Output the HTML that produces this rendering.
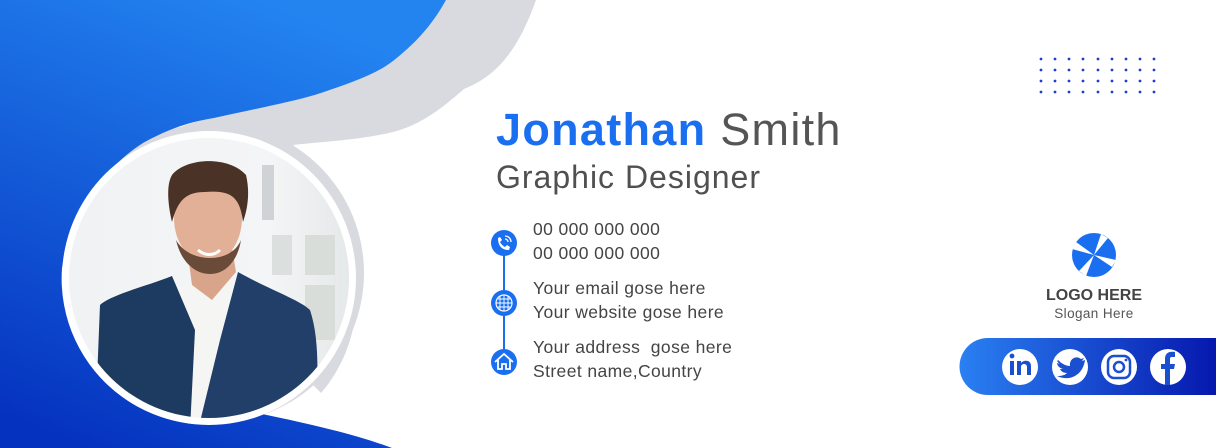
<!DOCTYPE html>
<html><head><meta charset="utf-8"><style>
html,body{margin:0;padding:0;background:#fff}
body{width:1216px;height:448px;position:relative;overflow:hidden;font-family:"Liberation Sans",sans-serif}
.t{position:absolute;white-space:nowrap}
</style></head><body>
<svg width="1216" height="448" style="position:absolute;left:0;top:0">
<defs>
<linearGradient id="bg" x1="0.6" y1="0" x2="0.2" y2="1">
<stop offset="0" stop-color="#2384f0"/><stop offset="1" stop-color="#0533c0"/></linearGradient>
<linearGradient id="sb" x1="0" y1="0" x2="1" y2="0">
<stop offset="0" stop-color="#2a80f2"/><stop offset="1" stop-color="#0618ae"/></linearGradient>
<linearGradient id="ph" x1="0" y1="0" x2="1" y2="0">
<stop offset="0" stop-color="#f0f2f4"/><stop offset="0.7" stop-color="#f4f5f6"/><stop offset="1" stop-color="#e3e7e7"/></linearGradient>
<clipPath id="pc"><circle cx="209" cy="278" r="140"/></clipPath>
</defs>
<circle cx="214" cy="273" r="150" fill="#d9dadf"/>
<path d="M446,0 H536 C520,45 500,75 464,89 C440,110 420,125 393,132 C360,140 320,142 293,145 C330,175 352,220 357,285 C358,330 345,365 321,393 L209,278 L150,150 C170,128 190,122 214,118 C260,108 300,100 321,93 C350,83 375,75 393,61 C420,40 435,20 446,0 Z" fill="#d9dadf"/>
<path d="M0,0 H446 C435,20 420,40 393,61 C375,75 350,83 321,93 C300,100 260,108 214,118 C190,122 170,128 143,143 C100,170 70,220 62,268 A146,146 0 0 0 262,414 C320,426 360,436 392,448 H0 Z" fill="url(#bg)"/>
<circle cx="209" cy="278" r="147" fill="#fff"/>
<g clip-path="url(#pc)">
<rect x="60" y="130" width="300" height="300" fill="url(#ph)"/>
<rect x="262" y="165" width="12" height="55" fill="#cfd3d5"/>
<rect x="305" y="235" width="30" height="40" fill="#d8ddda"/>
<rect x="305" y="285" width="30" height="55" fill="#d8ddda"/>
<rect x="272" y="235" width="20" height="40" fill="#dbdfde"/>
<path d="M170,290 L200,280 L245,280 L265,320 L240,420 L160,420 Z" fill="#f5f6f3"/>
<path d="M100,305 C110,295 150,285 172,276 L195,330 L190,430 L95,430 Z" fill="#1d3a60"/>
<path d="M238,272 C270,290 300,300 310,310 C320,340 318,380 315,430 L198,430 L220,340 Z" fill="#213f68"/>
<path d="M188,255 L192,285 L212,300 L236,272 L232,248 Z" fill="#d9a58a"/>
<ellipse cx="208" cy="218" rx="34" ry="45" fill="#e2b096"/>
<path d="M172,222 C168,205 166,185 172,175 C185,158 228,155 246,175 C250,192 248,208 243,222 C240,196 230,190 205,192 C186,192 178,200 172,222 Z" fill="#4a3326"/>
<path d="M176,240 C181,262 195,274 210,274 C226,274 238,260 241,240 C236,252 224,258 210,258 C196,258 183,252 176,240 Z" fill="#6a4a38"/>
<path d="M198,250 C205,256 214,256 220,250" stroke="#fff" stroke-width="3" fill="none"/>
</g>
<line x1="504" y1="243" x2="504" y2="362" stroke="#1a6ff0" stroke-width="2"/>
<circle cx="504" cy="243" r="13" fill="#1a6ff0"/>
<circle cx="504" cy="303" r="13" fill="#1a6ff0"/>
<circle cx="504" cy="362" r="13" fill="#1a6ff0"/>
<path d="M498,238 C498,246 502,250 509,250 L510,247 L507,245 L505,247 C503,246 501,244 500,242 L502,240 L500,237 Z" fill="#fff"/>
<path d="M505,236 A6,6 0 0 1 511,242 M505,239 A3,3 0 0 1 508,242" stroke="#fff" stroke-width="1.3" fill="none"/>
<circle cx="504" cy="303" r="8" fill="none" stroke="#fff" stroke-width="1.2"/>
<path d="M496,303 H512 M504,295 V311 M498,299 H510 M498,307 H510 M500,296 V310 M508,296 V310" stroke="#fff" stroke-width="0.9"/>
<path d="M495,362 L504,354 L513,362 M498,360 V369 H502 V364 H506 V369 H510 V360" stroke="#fff" stroke-width="1.8" fill="none"/>
<g fill="#1c3fd0">
<g id="r"><circle cx="1041" cy="59" r="1.4"/><circle cx="1055" cy="59" r="1.4"/><circle cx="1069" cy="59" r="1.4"/><circle cx="1083" cy="59" r="1.4"/><circle cx="1098" cy="59" r="1.4"/><circle cx="1112" cy="59" r="1.4"/><circle cx="1126" cy="59" r="1.4"/><circle cx="1140" cy="59" r="1.4"/><circle cx="1154" cy="59" r="1.4"/></g>
<use href="#r" y="11"/><use href="#r" y="22"/><use href="#r" y="33"/>
</g>
<circle cx="1094" cy="255" r="22" fill="#1a6ff0"/>
<g fill="#fff">
<path d="M1094,255 L1101,234 L1108,238 Z"/>
<path d="M1094,255 L1116,260 L1112,267 Z"/>
<path d="M1094,255 L1086,276 L1079,271 Z"/>
<path d="M1094,255 L1072,249 L1076,242 Z"/>
</g>
<path d="M988,338 H1216 V395 H988 A28.5,28.5 0 0 1 988,338 Z" fill="url(#sb)"/>
<g fill="#fff"><circle cx="1020" cy="367" r="18"/><circle cx="1070" cy="367" r="18"/><circle cx="1119" cy="367" r="18"/><circle cx="1168" cy="367" r="18"/></g>
<g fill="#1a4fd0">
<rect x="1010" y="361" width="4" height="14"/><circle cx="1012" cy="356" r="2.4"/>
<path d="M1017,361 H1021 V363 C1023,360 1031,359 1031,366 V375 H1027 V367 C1027,363 1021,363 1021,367 V375 H1017 Z"/>
<path d="M1058,360 C1062,364 1066,366 1070,366 C1069,359 1076,355 1081,359 L1084,358 L1082,361 L1085,360 C1083,375 1070,382 1057,376 C1062,376 1065,375 1067,373 C1063,373 1061,371 1060,369 L1063,369 C1059,368 1057,365 1057,363 L1060,364 C1057,362 1057,361 1058,360 Z"/>
<rect x="1108" y="356" width="22" height="22" rx="6" fill="none" stroke="#1a4fd0" stroke-width="2.5"/>
<circle cx="1119" cy="367" r="5" fill="none" stroke="#1a4fd0" stroke-width="2.5"/>
<circle cx="1126" cy="360" r="1.4"/>
<path d="M1165,385 V369 H1161 V364 H1165 V359 C1165,353 1169,351 1175,352 V357 H1172 C1170,357 1170,358 1170,360 V364 H1175 L1174,369 H1170 V385 Z"/>
</g>
</svg>
<div class="t" style="left:496px;top:104px;font-size:45px;line-height:52px;letter-spacing:1.3px"><b style="color:#1a6ff0">Jonathan</b> <span style="color:#555">Smith</span></div>
<div class="t" style="left:496px;top:158px;font-size:32px;line-height:38px;color:#505050;letter-spacing:1px">Graphic Designer</div>
<div class="t" style="left:533px;top:217px;font-size:17.5px;line-height:24px;color:#444;letter-spacing:0.4px">00 000 000 000<br>00 000 000 000</div>
<div class="t" style="left:533px;top:276px;font-size:17.5px;line-height:24px;color:#444;letter-spacing:0.4px">Your email gose here<br>Your website gose here</div>
<div class="t" style="left:533px;top:335px;font-size:17.5px;line-height:24px;color:#444;letter-spacing:0.4px">Your address&nbsp; gose here<br>Street name,Country</div>
<div class="t" style="left:1034px;width:120px;text-align:center;top:286px;font-size:16px;line-height:20px;color:#444;font-weight:bold">LOGO HERE</div>
<div class="t" style="left:1034px;width:120px;text-align:center;top:305px;font-size:13.5px;line-height:18px;color:#555;letter-spacing:0.4px">Slogan Here</div>
</body></html>
